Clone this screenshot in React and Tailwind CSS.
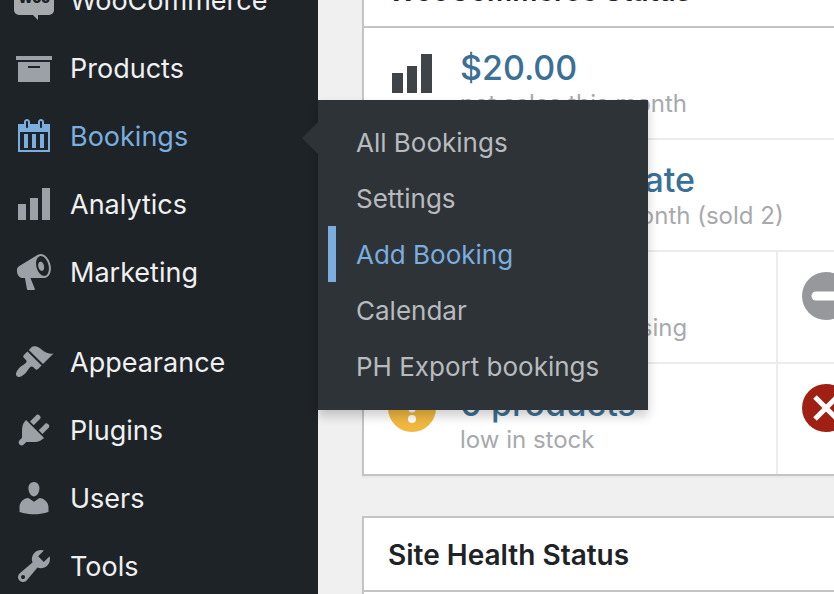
import React from "react";
import clsx from "clsx";

const ICONS = {
  archive: "M19 4v2H1V4h18zM2 7h16v10H2V7zm11 3V9H7v1h6z",
  calendar:
    "M15 4h3v14H2V4h3V3c0-.83.67-1.5 1.5-1.5S8 2.17 8 3v1h4V3c0-.83.67-1.5 1.5-1.5S15 2.17 15 3v1zM6 3v2.5c0 .28.22.5.5.5s.5-.22.5-.5V3c0-.28-.22-.5-.5-.5S6 2.72 6 3zm7 0v2.5c0 .28.22.5.5.5s.5-.22.5-.5V3c0-.28-.22-.5-.5-.5s-.5.22-.5.5zm4 14V8H3v9h14zM7 16V9H5v7h2zm4 0V9H9v7h2zm4 0V9h-2v7h2z",
  chart: "M18 18V2h-4v16h4zm-6 0V7H8v11h4zm-6 0v-8H2v8h4z",
  megaphone:
    "M18.15 5.94c.46 1.62.38 3.22-.02 4.48-.42 1.28-1.26 2.18-2.3 2.48-.16.06-.26.06-.4.06-.06.02-.12.02-.18.02-.06.02-.14.02-.22.02h-6.8l2.22 5.5c.02.14-.06.26-.14.34-.08.1-.24.16-.34.16H6.95c-.1 0-.26-.06-.34-.16-.08-.08-.16-.2-.14-.34l-1-5.5H4.25l-.02-.02c-.5.06-1.08-.18-1.54-.62s-.88-1.08-1.06-1.88c-.24-.8-.2-1.56-.02-2.2.18-.62.58-1.08 1.06-1.3l.02-.02 9-5.4c.1-.06.18-.1.24-.16.06-.04.14-.08.24-.12.16-.08.28-.12.5-.18 1.04-.3 2.24.1 3.22.98s1.84 2.24 2.26 3.86zm-2.58 5.98h-.02c.4-.1.74-.34 1.04-.7.58-.7.86-1.76.86-3.04 0-.64-.1-1.3-.28-1.98-.34-1.36-1.02-2.5-1.78-3.24s-1.68-1.1-2.46-.88c-.82.22-1.4.96-1.7 2-.32 1.04-.28 2.36.06 3.72.38 1.36 1 2.5 1.8 3.24.78.74 1.62 1.1 2.48.88zm-2.54-7.08c.22-.04.42-.02.62.04.38.16.76.48 1.02 1s.42 1.2.42 1.78c0 .3-.04.56-.12.8-.18.48-.44.84-.86.94-.34.1-.8-.06-1.14-.4s-.64-.86-.78-1.5c-.18-.62-.12-1.24.02-1.72s.48-.84.82-.94z",
  brush:
    "M14.48 11.06L7.41 3.99l1.5-1.5c.5-.56 2.3-.47 3.51.32 1.21.8 1.43 1.28 2.91 2.1 1.18.64 2.45 1.26 4.45.85zm-.71.71L6.7 4.7 4.93 6.47c-.39.39-.39 1.02 0 1.41l1.06 1.06c.39.39.39 1.03 0 1.42-.6.6-1.43 1.11-2.21 1.69-.35.26-.7.53-1.01.84C1.43 14.23.4 16.08 1.4 17.07c.99 1 2.84-.03 4.18-1.36.31-.31.58-.66.85-1.02.57-.78 1.08-1.61 1.69-2.21.39-.39 1.02-.39 1.41 0l1.06 1.06c.39.39 1.02.39 1.41 0z",
  plug: "M13.11 4.36L9.87 7.6 8 5.73l3.24-3.24c.35-.34 1.05-.2 1.56.32.52.51.66 1.21.31 1.55zm-8 1.77l.91-1.12 9.01 9.01-1.19.84c-.71.71-2.63 1.16-3.82 1.16H6.14L4.9 17.26c-.59.59-1.54.59-2.12 0-.59-.58-.59-1.53 0-2.12l1.24-1.24v-3.88c0-1.13.4-3.19 1.09-3.89zm7.26 3.97l3.24-3.24c.34-.35 1.04-.21 1.55.31.52.51.66 1.21.31 1.55l-3.24 3.25z",
  user: "M10 9.25c-2.27 0-2.73-3.44-2.73-3.44C7 4.02 7.82 2 9.97 2c2.16 0 2.98 2.02 2.71 3.81 0 0-.41 3.44-2.68 3.44zm0 2.57L12.72 10c2.39 0 4.52 2.33 4.52 4.53v2.49s-3.65 1.13-7.24 1.13c-3.65 0-7.24-1.13-7.24-1.13v-2.49c0-2.25 1.94-4.48 4.47-4.48z",
  wrench:
    "M16.68 9.77c-1.34 1.34-3.3 1.67-4.95.99l-5.41 6.52c-.99.99-2.59.99-3.58 0s-.99-2.59 0-3.57l6.52-5.42c-.68-1.65-.35-3.61.99-4.95 1.28-1.28 3.12-1.62 4.72-1.06l-2.89 2.89 2.82 2.82 2.86-2.87c.53 1.58.18 3.39-1.08 4.65zM3.81 16.21c.4.39 1.04.39 1.43 0 .4-.4.4-1.04 0-1.43-.39-.4-1.03-.4-1.43 0-.39.39-.39 1.03 0 1.43z",
};

function MenuIcon({ name }) {
  if (name === "woo") {
    return (
      <svg viewBox="0 0 40 40" className="size-10 shrink-0 fill-[#a7aaad]" aria-hidden="true">
        <path d="M5 10h30a5 5 0 0 1 5 5v15a5 5 0 0 1-5 5H24v5l-5-5H5a5 5 0 0 1-5-5V15a5 5 0 0 1 5-5z" />
        <text x="20" y="23" textAnchor="middle" fontSize="14" className="fill-[#1d2327] font-black">
          Woo
        </text>
      </svg>
    );
  }
  return (
    <svg viewBox="0 0 20 20" className="size-10 shrink-0 fill-current" aria-hidden="true">
      <path d={ICONS[name]} />
    </svg>
  );
}

const MENU = [
  { label: "WooCommerce", icon: "woo" },
  { label: "Products", icon: "archive" },
  { label: "Bookings", icon: "calendar", open: true },
  { label: "Analytics", icon: "chart" },
  { label: "Marketing", icon: "megaphone" },
  { label: "Appearance", icon: "brush", gap: true },
  { label: "Plugins", icon: "plug" },
  { label: "Users", icon: "user" },
  { label: "Tools", icon: "wrench" },
];

const SUBMENU = ["All Bookings", "Settings", "Add Booking", "Calendar", "PH Export bookings"];

function Submenu() {
  return (
    <div className="absolute top-0 left-full z-10 -mt-0.5 w-[330px] bg-[#2e3337] pt-3.5 pb-4 shadow-[0_6px_10px_rgba(0,0,0,0.2)]">
      <svg viewBox="0 0 16 32" className="absolute top-[22px] right-full h-8 w-4 fill-[#2e3337]" aria-hidden="true">
        <path d="M16 0v32L0 16z" />
      </svg>
      <ul>
        {SUBMENU.map((label) => (
          <li key={label} className="pl-2.5">
            <a
              href="#"
              className={clsx(
                "flex h-14 items-center border-l-8 pt-0.5 pl-5 text-[26px] leading-8 whitespace-nowrap",
                label === "Add Booking" ? "border-[#7badde] text-[#7badde]" : "border-transparent text-[#b7bbbf]"
              )}
            >
              {label}
            </a>
          </li>
        ))}
      </ul>
    </div>
  );
}

function Sidebar() {
  return (
    <nav className="w-[318px] shrink-0 bg-[#1d2327]" aria-label="Main menu">
      <ul className="-mt-[34px]">
        {MENU.map((item) => (
          <li key={item.label} className={clsx("relative", item.gap && "mt-[22px]")}>
            <a
              href="#"
              className={clsx(
                "flex h-[68px] items-center gap-4 pl-3.5",
                item.open ? "text-[#7badde]" : "text-[#9ca1a7]"
              )}
            >
              <MenuIcon name={item.icon} />
              <span className={clsx("pt-0.5 text-[27px] leading-9", !item.open && "text-[#f0f0f1]")}>
                {item.label}
              </span>
            </a>
            {item.open && <Submenu />}
          </li>
        ))}
      </ul>
    </nav>
  );
}

function StatusIcon({ kind }) {
  return (
    <svg viewBox="0 0 48 48" className="size-12 shrink-0" aria-hidden="true">
      {kind === "chart" && <path fill="#3f4448" d="M4 25h11v20H4zM19 18h10v27H19zM33 6h11v39H33z" />}
      {kind === "seller" && <path fill="#3f4448" d="M24 4l6 14h14L33 27l4 15-13-9-13 9 4-15L4 18h14z" />}
      {kind === "processing" && (
        <>
          <circle cx="24" cy="24" r="24" fill="#7ad03a" />
          <path d="M14 24h20" stroke="#fff" strokeWidth="6" />
        </>
      )}
      {kind === "hold" && (
        <>
          <circle cx="24" cy="24" r="24" fill="#96989b" />
          <path d="M14 24h20" stroke="#fff" strokeWidth="9" strokeLinecap="round" />
        </>
      )}
      {kind === "low" && (
        <>
          <circle cx="24" cy="24" r="24" fill="#f0b840" />
          <path d="M24 13v12" stroke="#fff" strokeWidth="7" strokeLinecap="round" />
          <circle cx="24" cy="35" r="4" fill="#fff" />
        </>
      )}
      {kind === "out" && (
        <>
          <circle cx="24" cy="24" r="24" fill="#a02013" />
          <path d="M13 13l22 22M35 13L13 35" stroke="#fff" strokeWidth="5" />
        </>
      )}
    </svg>
  );
}

function StatusCell({ kind, value, note }) {
  return (
    <a href="#" className="flex h-[110px] items-start gap-6 overflow-hidden pt-5 pl-6 whitespace-nowrap">
      <StatusIcon kind={kind} />
      <span>
        <strong className="block text-[34px] leading-10 font-medium text-[#3b7096]">{value}</strong>
        <span className="block text-[24px] leading-8 text-[#a7a9ac]">{note}</span>
      </span>
    </a>
  );
}

function Card({ title, children }) {
  return (
    <section className="border-y-2 border-l-2 border-[#c3c4c7] bg-white shadow-[0_2px_2px_rgba(0,0,0,0.04)]">
      <h2 className="flex h-[74px] items-center border-b-2 border-[#c3c4c7] pt-0.5 pl-6 text-[28px] leading-9 font-semibold whitespace-nowrap text-[#1d2327]">
        {title}
      </h2>
      {children}
    </section>
  );
}

export default function App() {
  return (
    <div className="flex h-screen overflow-hidden bg-[#f0f0f1] font-[Inter,sans-serif]">
      <Sidebar />
      <main className="-mt-12 flex min-w-0 flex-1 flex-col gap-10 pl-11">
        <Card title="WooCommerce Status">
          <ul className="divide-y-2 divide-[#ececec]">
            <li>
              <StatusCell kind="chart" value="$20.00" note="net sales this month" />
            </li>
            <li>
              <StatusCell kind="seller" value="Bookings Date" note="top seller this month (sold 2)" />
            </li>
            <li className="grid grid-cols-[414px_1fr]">
              <div className="border-r-2 border-[#ececec]">
                <StatusCell kind="processing" value="0 orders" note="awaiting processing" />
              </div>
              <div className="min-w-0">
                <StatusCell kind="hold" />
              </div>
            </li>
            <li className="grid grid-cols-[414px_1fr]">
              <div className="border-r-2 border-[#ececec]">
                <StatusCell kind="low" value="0 products" note="low in stock" />
              </div>
              <div className="min-w-0">
                <StatusCell kind="out" />
              </div>
            </li>
          </ul>
        </Card>
        <Card title="Site Health Status">
          <div className="h-40" />
        </Card>
      </main>
    </div>
  );
}
